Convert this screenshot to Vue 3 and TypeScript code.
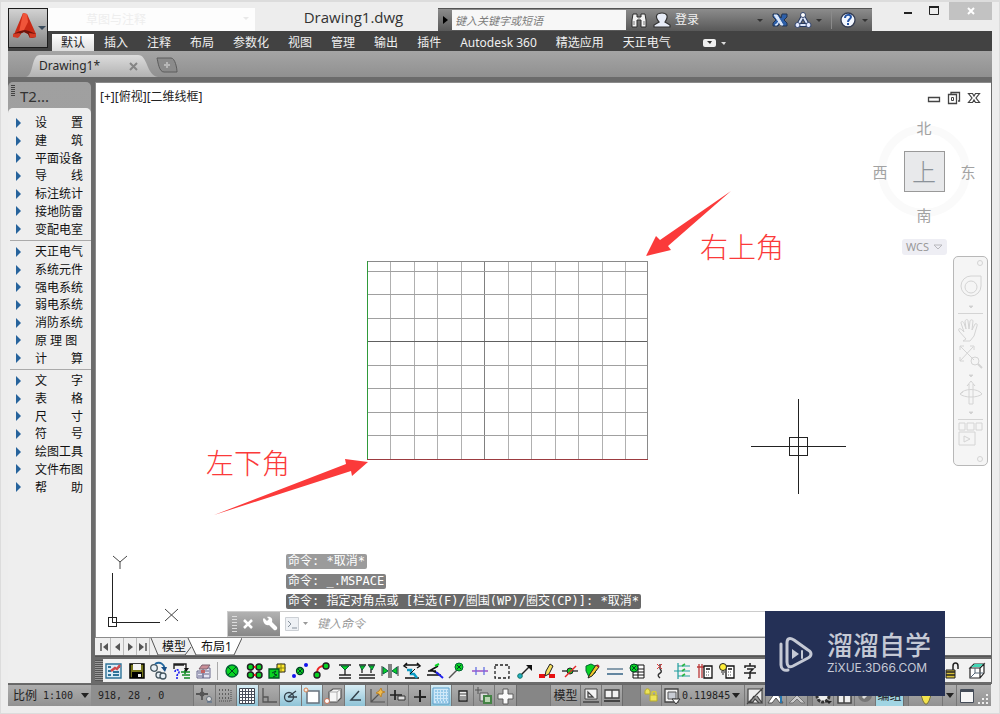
<script setup lang="ts">
import { ref } from 'vue'

interface Cell { name: string; icon: string; on?: boolean }

const ribbonTabs = ['默认', '插入', '注释', '布局', '参数化', '视图', '管理', '输出', '插件', 'Autodesk 360', '精选应用', '天正电气']
const activeTab = ref('默认')
const query = ref('')
const command = ref('')

const menuGroups: string[][] = [
  ['设 置', '建 筑', '平面设备', '导 线', '标注统计', '接地防雷', '变配电室'],
  ['天正电气', '系统元件', '强电系统', '弱电系统', '消防系统', '原 理 图', '计 算'],
  ['文 字', '表 格', '尺 寸', '符 号', '绘图工具', '文件布图', '帮 助'],
]

const history = [
  { text: '命令: *取消*', shade: 'pale' },
  { text: '命令: _.MSPACE', shade: 'mid' },
  { text: '命令: 指定对角点或 [栏选(F)/圈围(WP)/圈交(CP)]: *取消*', shade: 'deep' },
]

const gridX = [390, 414, 437, 461, 484, 508, 531, 555, 578, 602, 625]
const gridY = [271, 294, 318, 341, 365, 388, 412, 435]
const majorLines = [484, 341]

const fileTools: Cell[] = [
  { name: '图纸', icon: '<path d="M2 3h15v14H2z" fill="#d9ecf8" stroke="#2f7398" stroke-width="1.4"/><path d="M4 6h3M4 10h3M4 14h3M9 14h6M9 11h6M15 6h1" stroke="#2f7398" stroke-width="2"/><path d="M7 10l4-3 2 1 3-4" stroke="#d0494b" stroke-width="2.4" fill="none"/>' },
  { name: '保存', icon: '<path d="M3 3h14v14H3z" fill="#77771c" stroke="#000" stroke-width="1.5"/><path d="M6 3h8v6H6z" fill="#f4f4f4"/><path d="M5 11h10v6H5z" fill="#000"/><path d="M11 13h3v3h-3z" fill="#eee"/>' },
  { name: '替换', icon: '<circle cx="5" cy="7" r="3.3" fill="#e9f1f7" stroke="#45565f" stroke-width="1.3"/><circle cx="10" cy="14" r="3" fill="#e9f1f7" stroke="#45565f" stroke-width="1.3"/><circle cx="14" cy="15" r="3" fill="#e9f1f7" stroke="#45565f" stroke-width="1.3"/><path d="M6 3c5-3 9 0 10 5" fill="none" stroke="#24689f" stroke-width="2"/><path d="M12 6h6l-2 5z" fill="#184f87"/>' },
  { name: '查询', icon: '<path d="M2 8V3h12v5M2 4h10" stroke="#222" fill="none" stroke-width="1.4"/><path d="M3 11c0-3 4-3 4 0 0 2-2 2-2 4m0 1v2" stroke="#1414f0" fill="none" stroke-width="1.5" stroke-dasharray="2 1"/><path d="M9 11h9M10 14h8M12 17h6M13 9v4" stroke="#118c22" stroke-width="1.6"/><path d="M12 7h5l-3 4z" fill="#111"/>' },
  { name: '楼层', icon: '<path d="M3 10h6v7H3zM9 7h7v10H9z" fill="#e4e4f2" stroke="#66668a"/><path d="M4 12h4M4 15h4M10 10h5M10 13h5" stroke="#66668a"/><path d="M5 8l3-4h8l-3 4z" fill="#ca8f98" stroke="#7d6270"/><path d="M7 9h4v3H7z" fill="#c36363"/>' },
]

const g = '#08d423'
const drawTools: Cell[] = [
  { name: '灯具', icon: `<circle cx="10" cy="10" r="6" fill="${g}" stroke="#063" stroke-width="1.4"/><path d="M6 6l8 8M14 6l-8 8" stroke="#042"/>` },
  { name: '阵列灯具', icon: `<path d="M6 6h8v8H6z" fill="none" stroke="#555"/><circle cx="5.500" cy="6" r="3" fill="${g}" stroke="#222" stroke-width="1.5"/><circle cx="14" cy="6" r="3" fill="${g}" stroke="#222" stroke-width="1.5"/><circle cx="5.500" cy="14" r="3" fill="${g}" stroke="#222" stroke-width="1.5"/><circle cx="14" cy="14" r="3" fill="${g}" stroke="#222" stroke-width="1.5"/><path d="M9 6h2M9 14h2" stroke="#e22" stroke-width="2"/>` },
  { name: '插座', icon: `<path d="M10 3h8v8h-8z" fill="#ffe92e" stroke="#222"/><path d="M14 2v10M9 7h10" stroke="#8b8312"/><path d="M2 8h10v9H2z" fill="${g}" stroke="#052" stroke-width="1.3"/><path d="M5 12l4-2-2 3 3 1-4 2" fill="none" stroke="#042"/>` },
  { name: '插灯', icon: `<circle cx="10" cy="10" r="3.500" fill="${g}" stroke="#042" stroke-width="1.3"/><circle cx="4" cy="15" r="2" fill="#1212ed"/><circle cx="16" cy="4" r="2" fill="#1212ed"/><path d="M8 8l4 4M12 8l-4 4" stroke="#042"/>` },
  { name: '弧线布置', icon: `<path d="M5 12C5 6 9 5 13 5" fill="none" stroke="#e22" stroke-width="1.8"/><circle cx="5" cy="14" r="3" fill="${g}" stroke="#222" stroke-width="1.4"/><circle cx="14" cy="5" r="3" fill="${g}" stroke="#222" stroke-width="1.4"/>` },
  { name: '插接', icon: `<path d="M4 4h12M4 14h12M4 17h12M10 8v6" stroke="#222" stroke-width="1.3"/><path d="M6 5h8l-4 4z" fill="${g}" stroke="#063"/>` },
  { name: '双插接', icon: `<path d="M2 4h7M11 4h7M2 14h16M2 17h16M5 8v4M14 8v4" stroke="#222" stroke-width="1.3"/><path d="M3 5h5l-3 4zM12 5h5l-2 4z" fill="${g}" stroke="#063"/>` },
  { name: '镜像', icon: `<path d="M9 3v14M11 3v14" stroke="#111"/><path d="M3 6v7l5-3zM17 6v7l-5-3z" fill="${g}" stroke="#064"/><path d="M2 5v10M18 5v10" stroke="#333"/>` },
  { name: '移动', icon: '<path d="M3 4h14M5 2L2 5l3 2M15 2l3 3-3 2M3 17h14" stroke="#111" fill="none" stroke-width="1.5"/><path d="M5 9h4v4h3l3 4" stroke="#0a9bc5" stroke-width="2.500" fill="none"/><path d="M8 13l5-5" stroke="#111"/>' },
  { name: '编辑', icon: `<path d="M2 14h14M3 10h8M13 5L6 9l8 4" stroke="#111" stroke-width="1.6" fill="none"/><path d="M10 5l4-2" stroke="${g}" stroke-width="2"/><path d="M11 11l7 6" stroke="#2020f0" stroke-width="2"/>` },
  { name: '探测器', icon: `<path d="M2 17l8-8" stroke="#555" stroke-width="1.4"/><circle cx="12" cy="6" r="4" fill="${g}" stroke="#063"/><path d="M10 4l4 4M14 4l-4 4" stroke="#042"/>` },
  { name: '布线', icon: '<path d="M2 10h16" stroke="#8e39c0" stroke-width="1.3"/><path d="M6 6v8M14 6v8" stroke="#6570e2" stroke-width="1.3"/>' },
  { name: '框选', icon: '<path d="M3 4h14v13H3z" fill="none" stroke="#222" stroke-width="1.3" stroke-dasharray="3 2"/>' },
  { name: '引线', icon: '<path d="M6 14L15 5" stroke="#222" stroke-width="1.5"/><path d="M11 4h6v6z" fill="#111"/><circle cx="5" cy="15" r="2.300" fill="#20afc7" stroke="#176"/>' },
  { name: '标记', icon: '<path d="M2 15h6M12 15h6" stroke="#e71111" stroke-width="4"/><path d="M9 10l4-7 3 2-4 8-4 2z" fill="#f5df5e" stroke="#222"/>' },
  { name: '断线', icon: `<path d="M2 10h16" stroke="#333" stroke-width="1.4"/><circle cx="10" cy="10" r="3" fill="${g}" stroke="#222"/><path d="M5 16L16 5" stroke="#e52727" stroke-width="1.5"/>` },
  { name: '画笔', icon: `<path d="M4 5l5-2 6 3-2 6-6 4-3-6z" fill="${g}" stroke="#063"/><path d="M8 13l6-9 3 2-7 9-4 2z" fill="#f3c72c" stroke="#222"/><path d="M15 4l2 2" stroke="#a23" stroke-width="2"/>` },
  { name: '平行线', icon: '<path d="M2 8h16" stroke="#1d4868"/><path d="M2 13h16" stroke="#6386a0" stroke-width="2"/>' },
  { name: '统计表', icon: `<path d="M6 4h11v13H6zM6 8h11M6 11h11M6 14h11M11 4v13" fill="#fff" stroke="#111"/><circle cx="7" cy="7" r="4" fill="${g}" stroke="#042"/><path d="M5 5l4 4M9 5l-4 4" stroke="#042"/>` },
  { name: '回路', icon: '<path d="M10 17c-6-5 5-4 0-9M10 8V3" fill="none" stroke="#333" stroke-width="1.4"/><path d="M7 3l5 5M12 3L7 8" stroke="#e13838"/>' },
  { name: '系统图', icon: '<path d="M6 2v16M6 5h12M2 10h16M6 15h12" stroke="#1e9d9d" stroke-width="1.2"/><path d="M10 5l3-2M10 10l3-2M10 15l3-2" stroke="#2ab543" stroke-width="1.6"/>' },
  { name: '配电箱', icon: '<path d="M2 6h8M4 3v14M7 3v14" stroke="#ba3838" stroke-width="1.3"/><path d="M9 5h8v12H9z" fill="#fff" stroke="#111" stroke-width="1.300"/><path d="M11 8h4" stroke="#111" stroke-width="1.500"/><path d="M11 11h1m1 0h1M11 14h1m1 0h1" stroke="#555"/>' },
  { name: '照度计算', icon: '<path d="M9 5h8v12H9z" fill="#fff" stroke="#111" stroke-width="1.300"/><path d="M11 8h4" stroke="#111" stroke-width="1.500"/><path d="M11 11h1m1 0h1M11 14h1m1 0h1" stroke="#555"/><circle cx="6" cy="6" r="3.500" fill="#ffef38" stroke="#222"/><path d="M4 11h4M5 13h2" stroke="#222"/>' },
  { name: '文字', icon: '<path d="M10 2v3M5 7V5h10v2M7 8h6l-3 3v6H8M4 12h12" fill="none" stroke="#222" stroke-width="1.500"/>' },
]
const endTools: Cell[] = [
  { name: '解锁', icon: '<path d="M3 9h9v8H3z" fill="#d8c13a" stroke="#222"/><path d="M3 11h9M3 14h9" stroke="#222" stroke-width="1.5"/><path d="M10 9V5c0-4 5-4 5 0v3" fill="none" stroke="#222" stroke-width="1.500"/>' },
  { name: '三维视图', icon: '<path d="M4 7l4-4h10l-4 4zM4 7h10v10H4zM14 7l4-4v9l-4 5" fill="#fff" stroke="#222" stroke-width="1.2"/><path d="M5 6l4-3h8l-3 3z" fill="#40d6b5"/><path d="M4 17l5-5V7M9 12h8" fill="none" stroke="#567"/>' },
]

const modeCells: Cell[] = [
  { name: '推断约束', icon: '<path d="M8 2v12M2 8h12" stroke="#3c3c3c" stroke-width="1.3"/><circle cx="8" cy="8" r="2.500" fill="#555"/><circle cx="15" cy="13" r="2.500" fill="#ddd" stroke="#68717c"/><path d="M13 16h5" stroke="#516b88"/>' },
  { name: '捕捉', icon: '<path d="M3 4h11M3 8h11M3 12h11" stroke="#4a4a4a" stroke-width="1.3" stroke-dasharray="1 2"/><path d="M15 4v12M3 15h12" stroke="#4a4a4a" stroke-dasharray="1 1"/>' },
  { name: '栅格', on: true, icon: '<path d="M2.500 2.500h15v15h-15z" fill="#fff" stroke="#3e4550"/><path d="M5.500 2v15M8.500 2v15M11.500 2v15M14.500 2v15M2 5.500h15M2 8.500h15M2 11.500h15M2 14.500h15" stroke="#4b505d"/>' },
  { name: '正交', icon: '<path d="M4 2v14h14M4 11h5v5" fill="none" stroke="#555" stroke-width="1.300"/>' },
  { name: '极轴', on: true, icon: '<circle cx="9" cy="11" r="4.500" fill="none" stroke="#34424c" stroke-width="1.3"/><path d="M8 11L16 5M8 11h9" stroke="#34424c" stroke-width="1.3"/>' },
  { name: '对象捕捉', on: true, icon: '<path d="M5 5h12v12H5z" fill="#fff" stroke="#68727c" stroke-width="1.500"/><circle cx="4" cy="4" r="2" fill="#f5ece3" stroke="#d88353"/>' },
  { name: '三维捕捉', icon: '<path d="M6 6l4-3h8v9l-4 4H6z" fill="#f6f6f6" stroke="#555" stroke-width="1.2"/><path d="M6 6h8v10M14 6l4-3" fill="none" stroke="#aaa"/><circle cx="4" cy="15" r="2.500" fill="#fff" stroke="#cb7355"/>' },
  { name: '对象追踪', on: true, icon: '<path d="M14 5L6 14h10" fill="none" stroke="#34424c" stroke-width="1.5"/>' },
  { name: '动态坐标', icon: '<path d="M4 3v13h14M4 16L13 7" fill="none" stroke="#555" stroke-width="1.200"/><path d="M14 2l1 3 3 1-3 1-1 4-2-3-3-1 3-2z" fill="#efbb4b" stroke="#bd852c"/>' },
  { name: '动态输入', icon: '<path d="M7 4v10M2 9h12" stroke="#222" stroke-width="1.700"/><path d="M10 10h7v4h-7z" fill="#ddd" stroke="#333"/>' },
  { name: '线宽', icon: '<path d="M10 4v7M4 11h6" stroke="#222" stroke-width="1.500"/><path d="M10 4v12M10 11h6" stroke="#222" stroke-width="2"/>' },
  { name: '透明度', on: true, icon: '<path d="M2 2h16v16H2z" fill="#cfe8f8" stroke="#5ba0cc"/><path d="M4 5h13M4 8h13M4 11h13M4 14h13M5 16h12" stroke="#5fa9d8" stroke-width="1.200" stroke-dasharray="2 1"/>' },
  { name: '快捷特性', icon: '<path d="M6 5h8v10H6z" fill="#eee" stroke="#222" stroke-width="1.3"/><path d="M6 8h8M8 10v4M10 10v4M12 10v4" stroke="#444"/>' },
  { name: '选择循环', icon: '<path d="M4 1v7M1 4h7" stroke="#555"/><path d="M6 7h8v8H6z" fill="#ddd" stroke="#555"/><path d="M10 10h7v7h-7z" fill="#b9d6b2" stroke="#438344" stroke-width="2"/>' },
  { name: '注释监视器', icon: '<path d="M7 3h5v5h5v5h-5v5H7v-5H2V8h5z" fill="#fafafa" stroke="#5c5c5c"/>' },
]

const viewTools: Cell[] = [
  { name: '模型视图', icon: '<path d="M4 3h12v10H4z" fill="#f2f2f2" stroke="#444"/><path d="M7 6v5h5zM2 16h16" fill="none" stroke="#444" stroke-width="1.300"/>' },
  { name: '图纸视图', icon: '<path d="M3 4h7v8H3zM10 4h7v8h-7z" fill="#f2f2f2" stroke="#444" stroke-width="1.300"/><path d="M2 15h16" stroke="#444" stroke-width="2"/>' },
]
</script>

<template>
  <div class="frame">
    <header class="titlebar">
      <button class="app-button" aria-label="应用程序菜单">
        <svg width="38" height="38" viewBox="0 0 38 38">
          <path d="M14 4l4 1 9 20v3l-6 1-2-4-4-2-3 1-2 4-5-1 1-4z" fill="#c92a16" />
          <path d="M14 4l4 1 1 8-4 8-5 2z" fill="#f0553a" />
          <path d="M4 25l7-3 5-1 4 1 7 3v3l-6 1-2-4-4-2-4 2-2 3-5-1z" fill="#6f130b" />
          <path d="M4 25l6-1 2 1-3 4-5-1zM20 24l7 1v3l-6 1z" fill="#d23a24" />
          <path d="M29 17h8l-4 4z" fill="#3a4b5c" />
        </svg>
      </button>
      <div class="quick"><span>草图与注释</span><i></i></div>
      <h1>Drawing1.dwg</h1>
      <div class="info">
        <button class="expand" aria-label="展开"><svg width="12" height="20" viewBox="0 0 12 20"><path d="M4 6l5 4-5 4z" fill="#000" /></svg></button>
        <input v-model="query" type="text" placeholder="键入关键字或短语" aria-label="搜索" />
        <button aria-label="搜索帮助">
          <svg width="18" height="18" viewBox="0 0 18 18"><path d="M3 3h4v3h4V3h4l1 6v7h-5V9H7v7H2V9z" fill="#f2f2f2" stroke="#2d2d2d" /><path d="M4 10v4M14 10v4M9 6v3" stroke="#777" /></svg>
        </button>
        <button class="sign">
          <svg width="18" height="18" viewBox="0 0 18 18"><path d="M6 11c-5-6-2-9 3-9s7 3 3 9l5 3v2H1v-2z" fill="#e8edf8" stroke="#333" stroke-width="1.200" /></svg>
          <span>登录</span>
        </button>
        <button class="sign-more" aria-label="登录选项"><i class="tri"></i></button>
        <button aria-label="Exchange">
          <svg width="18" height="18" viewBox="0 0 18 18"><path d="M2 3h5l3 4 1-4h5v3l-3 3 3 3v3h-5l-2-3-2 3H2v-3l3-3-3-3z" fill="#2d5fa8" stroke="#233450" /><path d="M3 4h3l6 10h-2zM4 14h2l2-4" fill="#dce8fa" stroke="#dce8fa" /></svg>
        </button>
        <button class="a360" aria-label="Autodesk 360 服务">
          <svg width="18" height="18" viewBox="0 0 18 18"><path d="M9 5L4 14h10z" fill="none" stroke="#26385f" stroke-width="4" /><path d="M9 5L4 14h10z" fill="none" stroke="#dce6fa" stroke-width="2" /><circle cx="9" cy="4" r="2.500" fill="#fff" stroke="#33466f" /><circle cx="3.500" cy="14" r="2.500" fill="#e4eaff" stroke="#33466f" /><circle cx="14.500" cy="14" r="2.500" fill="#e4eaff" stroke="#33466f" /></svg>
          <i class="tri"></i>
        </button>
        <button class="help" aria-label="帮助">
          <svg width="18" height="18" viewBox="0 0 18 18"><circle cx="9" cy="9" r="7" fill="#f3f7ff" stroke="#333b50" stroke-width="1.300" /><path d="M6 7c0-4 6-4 6-1 0 2-3 2-3 5m0 1v2" fill="none" stroke="#2454a4" stroke-width="2" /></svg>
          <i class="tri"></i>
        </button>
      </div>
      <div class="window-buttons">
        <button aria-label="最小化"><svg width="12" height="12" viewBox="0 0 12 12"><path d="M2 8h8" stroke="#222" stroke-width="2" /></svg></button>
        <button aria-label="最大化"><svg width="12" height="12" viewBox="0 0 12 12"><path d="M1.500 2.500h9v7h-9z" fill="none" stroke="#222" /><path d="M1 2h10" stroke="#222" stroke-width="2" /></svg></button>
        <button class="close" aria-label="关闭"><svg width="12" height="12" viewBox="0 0 12 12"><path d="M3 3l6 6M9 3l-6 6" stroke="#fff" stroke-width="2" /></svg></button>
      </div>
    </header>

    <nav class="ribbon">
      <button v-for="tab in ribbonTabs" :key="tab" :class="{ active: tab === activeTab }" @click="activeTab = tab">{{ tab }}</button>
      <button class="ribbon-toggle" aria-label="最小化功能区">
        <svg width="24" height="10" viewBox="0 0 24 10"><rect x="0" y="1" width="13" height="8" rx="2" fill="#eee" /><path d="M4 3h5l-2 3z" fill="#333" /><path d="M18 4h5l-2 3z" fill="#ddd" /></svg>
      </button>
    </nav>

    <div class="documents">
      <button class="doc">
        <svg class="doc-shape" width="136" height="22" viewBox="0 0 136 22">
          <defs><linearGradient id="tabFill" x1="0" y1="0" x2="0" y2="1"><stop offset="0" stop-color="#dcdcdc" /><stop offset="1" stop-color="#b2b2b2" /></linearGradient></defs>
          <path d="M0 22c8-2 5-22 14-22h98c10 0 8 20 20 22z" fill="url(#tabFill)" />
        </svg>
        <span>Drawing1*</span>
        <svg width="9" height="9" viewBox="0 0 9 9"><path d="M1 1l7 7M8 1L1 8" stroke="#858585" stroke-width="2" /></svg>
      </button>
      <button class="new-doc" aria-label="新图形">
        <svg width="24" height="18" viewBox="0 0 24 18"><path d="M2 2h14c4 0 6 10 6 14H9C4 16 3 6 2 2z" fill="#8b8b8b" stroke="#5c5c5c" /><path d="M12 6v6M9 9h6" stroke="#b7b7b7" stroke-width="2" /></svg>
      </button>
    </div>

    <div class="body">
      <aside class="palette">
        <div class="palette-head"><i></i><span>T2...</span></div>
        <div class="menu">
          <ul v-for="(group, i) in menuGroups" :key="i">
            <li v-for="item in group" :key="item"><button><i></i><span :class="{ spread: item.length === 3 }">{{ item }}</span></button></li>
          </ul>
        </div>
      </aside>

      <main class="work">
        <section class="canvas">
          <svg class="drawing" width="896" height="554" viewBox="96 83 896 554">
            <g fill="none" stroke="#b4b4b4" stroke-width="1">
              <path v-for="x in gridX" :key="`x${x}`" :d="`M${x}.5 261V459`" :stroke="majorLines.includes(x) ? '#808080' : '#b0b0b0'" />
              <path v-for="y in gridY" :key="`y${y}`" :d="`M367 ${y}.5H648`" :stroke="majorLines.includes(y) ? '#606060' : '#a0a0a0'" />
              <path d="M367 261.500H648M647.500 261V459" stroke="#8a8a8a" />
              <path d="M367.500 261V459" stroke="#2f9a3a" />
              <path d="M367 459.500H648" stroke="#9c3b40" />
            </g>
            <g fill="#fb3a3a">
              <path d="M731 191L668 246l3 4-25 6 10-20 4 4z" />
              <path d="M214 515l132-51-1-5 23 3-16 14-1-5z" />
            </g>
            <g fill="none" stroke="#222" shape-rendering="crispEdges">
              <path d="M751 446.500H846M798.500 399V494M789.500 437.500h18v18h-18z" />
              <path d="M112.500 573V622H160M108.500 617.500h8v9h-8z" />
            </g>
            <g fill="none" stroke="#444"><path d="M113 556l7 6 7-6M120 562v7M165 609l13 12M178 609l-13 12" /></g>
          </svg>
          <span class="view-label">[+][俯视][二维线框]</span>
          <span class="note upper">右上角</span>
          <span class="note lower">左下角</span>

          <div class="view-buttons">
            <button aria-label="最小化视图"><svg width="14" height="14" viewBox="0 0 14 14"><path d="M1.500 6.500h11v4h-11z" fill="#fff" stroke="#444" stroke-width="1.300" /></svg></button>
            <button aria-label="还原视图"><svg width="14" height="14" viewBox="0 0 14 14"><path d="M4 3V1.500h8.500V10H11M1.500 3.500h8v9h-8z" fill="none" stroke="#444" stroke-width="1.300" /><path d="M4.500 6.500h2v3h-2z" fill="none" stroke="#444" /></svg></button>
            <button aria-label="关闭视图"><svg width="14" height="14" viewBox="0 0 14 14"><path d="M1.500 2.500h4L7 5l1.500-2.500h4L9 7l3.500 4.500h-4L7 9l-1.500 2.500h-4L5 7z" fill="#fff" stroke="#444" stroke-width="1.200" /></svg></button>
          </div>

          <div class="cube">
            <span>北</span>
            <div class="cube-row"><span>西</span><button>上</button><span>东</span></div>
            <span>南</span>
          </div>
          <button class="wcs">WCS <svg width="10" height="7" viewBox="0 0 10 7"><path d="M1 1h8L5 5z" fill="none" stroke="#b8b8bd" /></svg></button>

          <div class="nav-bar">
            <svg width="33" height="208" viewBox="0 0 33 208" fill="none" stroke="#d4d4d4">
              <circle cx="26" cy="6" r="2.500" /><circle cx="26" cy="202" r="2.500" />
              <path d="M17 19h10v10a10 10 0 1 1-10-10z" /><circle cx="17" cy="30" r="6" />
              <path d="M15 49h4l-2 2zM15 118h4l-2 2zM15 155h4l-2 2z" fill="#ccc" />
              <path d="M4 56.500h25M4 162.500h25" />
              <path d="M12 82l-7-8c-1-3 1-3 3-1l2 2-3-9c0-2 2-2 3 0l2 6-1-8c1-2 3-2 3 0l1 8 1-8c1-2 3-1 3 0l-1 9 3-6c1-1 3 0 2 2l-3 10-4 5h-7z" />
              <path d="M6 89l14 14M6 104l13-14M6 93v-4h4M16 89h4v4M6 100v4h4" /><circle cx="21" cy="104" r="4" /><path d="M24 107l4 4" stroke-width="2" />
              <path d="M15 127v20h4v-20l2 2-4-5-4 5zM6 137c4-6 18-6 22 0-4 4-18 4-22 0l3-2" />
              <path d="M5 166h6v7H5zM13 166h7v7h-7zM22 166h6v7h-6zM5 175h16v13H5zM10 179l6 3-6 3z" />
            </svg>
          </div>

          <div class="history">
            <span v-for="line in history" :key="line.text" :class="line.shade">{{ line.text }}</span>
          </div>
          <div class="command">
            <div class="command-tools">
              <i></i>
              <button aria-label="关闭命令行"><svg width="12" height="12" viewBox="0 0 12 12"><path d="M2 2l8 8M10 2l-8 8" stroke="#fff" stroke-width="2.500" /></svg></button>
              <button aria-label="自定义"><svg width="16" height="16" viewBox="0 0 16 16"><path d="M2 2l3 3 2-2-2-2c4-1 6 2 5 5l5 5c1 2-1 4-3 3L7 9C4 10 1 7 1 3z" fill="#fff" /></svg></button>
            </div>
            <button class="prompt" aria-label="最近使用的命令"><svg width="26" height="16" viewBox="0 0 26 16"><path d="M1.500 1.500h13v13h-13z" fill="#eef1f5" stroke="#ccd0d5" /><path d="M4 5l3 3-3 3M8 12h5" fill="none" stroke="#87919c" /><path d="M19 6h5l-2.500 3z" fill="#999" /></svg></button>
            <input v-model="command" type="text" placeholder="键入命令" aria-label="命令" />
          </div>
        </section>

        <div class="sheets">
          <div class="sheet-nav">
            <button aria-label="首页"><svg width="12" height="12" viewBox="0 0 12 12"><path d="M3 2v8" stroke="#555" stroke-width="1.500" /><path d="M10 2v8L5 6z" fill="#555" /></svg></button>
            <button aria-label="上一页"><svg width="12" height="12" viewBox="0 0 12 12"><path d="M9 2v8L4 6z" fill="#555" /></svg></button>
            <button aria-label="下一页"><svg width="12" height="12" viewBox="0 0 12 12"><path d="M4 2v8l5-4z" fill="#555" /></svg></button>
            <button aria-label="末页"><svg width="12" height="12" viewBox="0 0 12 12"><path d="M9 2v8" stroke="#555" stroke-width="1.500" /><path d="M2 2v8l5-4z" fill="#555" /></svg></button>
          </div>
          <div class="sheet-tabs">
            <svg width="92" height="17" viewBox="0 0 92 17"><path d="M38 0h54l-8 17H46z" fill="#fff" /><path d="M1 0l7 17h27l6-8M38 0l8 17h38l8-17" fill="none" stroke="#555" /></svg>
            <button>模型</button><button>布局1</button>
          </div>
        </div>

        <div class="tools">
          <i class="grip"></i>
          <div class="tool-strip">
            <div class="file-tools"><button v-for="t in fileTools" :key="t.name" :aria-label="t.name"><svg width="20" height="20" viewBox="0 0 20 20" v-html="t.icon" /></button></div>
            <i class="tool-rule"></i>
            <div class="draw-tools"><button v-for="t in drawTools" :key="t.name" :aria-label="t.name"><svg width="20" height="20" viewBox="0 0 20 20" v-html="t.icon" /></button></div>
            <div class="end-tools"><button v-for="t in endTools" :key="t.name" :aria-label="t.name"><svg width="20" height="20" viewBox="0 0 20 20" v-html="t.icon" /></button></div>
          </div>
        </div>
      </main>
    </div>

    <footer class="status">
      <label class="ratio"><span>比例</span><select aria-label="比例"><option>1:100</option></select><i class="arrow"></i></label>
      <output class="coords">918, 28 , 0</output>
      <div class="modes"><button v-for="c in modeCells" :key="c.name" :class="{ on: c.on }" :aria-label="c.name"><svg width="20" height="20" viewBox="0 0 20 20" v-html="c.icon" /></button></div>
      <span class="well wide"></span>
      <button class="space">模型</button>
      <button v-for="c in viewTools" :key="c.name" class="cell" :aria-label="c.name"><svg width="20" height="20" viewBox="0 0 20 20" v-html="c.icon" /></button>
      <span class="well"></span>
      <button class="cell" aria-label="锁定比例"><svg width="20" height="20" viewBox="0 0 20 20"><path d="M4 5c1-3 4-3 5 0v3H4zM9 9h7v6H9z" fill="#ede45a" stroke="#b8ad2a" /><path d="M11 9V7c0-2 4-2 4 0v2" fill="none" stroke="#d8ce37" stroke-width="1.500" /></svg></button>
      <label class="scale">
        <svg width="20" height="20" viewBox="0 0 20 20"><path d="M3 3h13v13H3z" fill="#f3f3f3" stroke="#444" stroke-width="1.300" /><path d="M6 6h8v7H6z" fill="#c8ccd4" stroke="#555" /><path d="M10 13h8l-4 5z" fill="#fff" stroke="#333" /></svg>
        <select aria-label="视口比例"><option>0.119845</option></select><i class="arrow"></i>
      </label>
      <button class="cell" aria-label="注释比例"><svg width="20" height="20" viewBox="0 0 20 20"><path d="M3 3h14v14H3zM2 18L18 2M9 10l-4 6h3l2-3 4 4h3l-5-7" fill="#eee" stroke="#444" stroke-width="1.200" /></svg></button>
      <button class="cell" aria-label="注释可见性"><svg width="20" height="20" viewBox="0 0 20 20"><path d="M10 5L2 17h4l4-5 4 5h3z" fill="#fff" stroke="#555" /><path d="M15 9v8" stroke="#2676b0" stroke-width="2" /></svg></button>
      <button class="cell" aria-label="自动缩放"><svg width="20" height="20" viewBox="0 0 20 20"><path d="M10 9l-8 8h4l4-4 4 4h4z" fill="#ccc" stroke="#777" /></svg></button>
      <span class="well slim"></span>
      <button class="cell" aria-label="切换工作空间"><svg width="20" height="20" viewBox="0 0 20 20"><circle cx="10" cy="10" r="6" fill="#eee" stroke="#333" stroke-width="3" stroke-dasharray="3 1" /><path d="M13 15h6l-3 3z" fill="#222" /></svg></button>
      <button class="cell" aria-label="锁定界面"><svg width="20" height="20" viewBox="0 0 20 20"><path d="M4 6h13v11H4zM10 5v12" fill="#eee" stroke="#444" stroke-width="1.500" /></svg></button>
      <button class="cell" aria-label="硬件加速"><svg width="20" height="20" viewBox="0 0 20 20"><circle cx="10" cy="9" r="7" fill="#777" /><path d="M8 12l8-8" stroke="#ddd" stroke-width="3" /></svg></button>
      <button class="group-name">编组</button>
      <span class="well slim"></span>
      <button class="isolate" aria-label="隔离对象"><svg width="20" height="20" viewBox="0 0 20 20"><path d="M5 9h10l-2 6-2 3H9l-2-3z" fill="#f3e34d" stroke="#7c7639" /></svg></button>
      <button class="menu-arrow" aria-label="状态栏菜单"><i class="arrow"></i></button>
      <button class="cell" aria-label="全屏显示"><svg width="20" height="20" viewBox="0 0 20 20"><path d="M3.500 3.500h13v13h-13z" fill="#f6f6f6" stroke="#444c58" /><path d="M4 5h12" stroke="#444c58" stroke-width="2" /></svg></button>
      <svg class="resize" width="14" height="14" viewBox="0 0 14 14"><path d="M9 2h2v2H9zM5 6h2v2H5zM9 6h2v2H9zM1 10h2v2H1zM5 10h2v2H5zM9 10h2v2H9z" fill="#eee" /></svg>
    </footer>

    <div class="brand">
      <svg width="36" height="38" viewBox="0 0 36 38" fill="none" stroke="#c5c9d5" stroke-width="3" stroke-linejoin="round" stroke-linecap="round">
        <path d="M9 8v19c0 4 2 6 6 4l15-8c4-2 4-6 0-8L16 5C11 2 9 4 9 8z" /><path d="M3 9v21c0 4 3 6 7 5" />
        <path d="M14 14v10l7-5z" fill="#c5c9d5" stroke="none" /><path d="M24 16v7" stroke-width="2" />
      </svg>
      <div><strong>溜溜自学</strong><span>ZiXUE.3D66.COM</span></div>
    </div>
  </div>
</template>

<style>
body { margin: 0; background: #eeeeee; }
</style>

<style scoped>
* { box-sizing: border-box; }
button, input, select { font: inherit; color: inherit; border: 0; padding: 0; margin: 0; background: none; }
button { display: flex; align-items: center; justify-content: center; white-space: nowrap; }
select { appearance: none; }
svg { display: block; flex: none; }
.frame {
  position: relative; display: flex; flex-direction: column; min-height: 100vh;
  padding: 6px 7px 7px; border: 1px solid #dcdcdc; border-top-width: 2px; background: #ededed;
  font: 12px/16px "Noto Sans", "Noto Sans CJK SC", sans-serif; color: #222;
}
.titlebar { display: flex; height: 23px; }
.app-button {
  position: absolute; left: 7px; top: 6px; z-index: 2; width: 40px; height: 40px;
  border: 1px solid #1c1c1c; background: linear-gradient(#d2d2d2, #858585);
}
.quick { display: flex; align-items: center; justify-content: space-between; width: 247px; padding: 0 6px 0 78px; background: #fdfdfd; color: #eeeeee; }
.quick i { border: 3px solid transparent; border-top-color: #e8e8e8; }
h1 { flex: 1 1 183px; margin: 0; padding-left: 14px; text-align: center; font: 15px/18px "Open Sans", sans-serif; color: #333; }
.info { display: flex; align-items: center; flex: 0 0 434px; border-top: 1px solid #555; background: linear-gradient(#8c8c8c, #585858); color: #f0f0f0; }
.expand { width: 14px; }
.info input { width: 174px; height: 20px; margin-right: 4px; padding: 0 3px; background: #f7f7f7; color: #333; font-size: 11px; }
.info input::placeholder { color: #7c7c7c; opacity: 1; font-style: italic; }
.command input::placeholder { color: #999; opacity: 1; font-style: italic; }
.info > button:nth-of-type(2) { width: 18px; }
.sign { gap: 4px; margin-left: 5px; }
.sign-more { margin-left: auto; }
.tri { border: 3px solid transparent; border-top-color: #333; margin-top: 3px; }
.sign-more + button { margin-left: 8px; }
.a360 { margin-left: 5px; gap: 4px; padding-right: 9px; border-right: 1px solid #8a8a8a; }
.help { margin: 0 4px 0 7px; gap: 5px; }
.window-buttons { display: flex; flex: 1 0 120px; justify-content: flex-end; margin-top: -6px; }
.window-buttons button { width: 26px; height: 18px; }
.window-buttons .close { width: 43px; margin-left: 2px; background: #c2c2c2; }
.ribbon { display: flex; gap: 1px; height: 20px; padding: 3px 0 0 44px; background: #424242; color: #f0f0f0; }
.ribbon button { padding: 0 9px; }
.ribbon .active { background: linear-gradient(#fff, #dedede); color: #222; }
.ribbon .ribbon-toggle { margin-left: 13px; }
.documents { display: flex; align-items: flex-end; height: 26px; padding-left: 18px; background: linear-gradient(#a5a5a5, #909090); }
.doc { position: relative; justify-content: flex-start; width: 134px; height: 22px; gap: 29px; padding-left: 13px; color: #292929; }
.doc > * { position: relative; }
.doc .doc-shape { position: absolute; left: 0; top: 0; }
.new-doc { margin: 0 0 3px -5px; z-index: 1; }
.body { display: flex; flex: 1; padding: 5px 1px 1px 0; background: #6b6b6b; }
.palette { flex: 0 0 83px; display: flex; flex-direction: column; margin-right: 4px; border-radius: 5px 5px 0 0; background: linear-gradient(#a0a0a0, #969696); }
.palette-head { display: flex; height: 26px; font-size: 15px; line-height: 28px; color: #333; }
.palette-head i { width: 4px; height: 12px; margin: 3px 5px 0 3px; background: repeating-linear-gradient(#444 0 1px, transparent 1px 2px); }
.menu { flex: 1; padding-top: 6px; border-radius: 5px 5px 0 0; background: #eeeeee; color: #111; }
ul { display: grid; grid-auto-rows: 1fr; height: 124px; margin: 0 0 5px 2px; padding: 0; list-style: none; position: relative; }
ul + ul::before { content: ""; position: absolute; left: 0; right: 0; top: -3px; border-top: 1px solid #aaa; }
li button { height: 100%; padding-left: 6px; line-height: 17px; }
li i { width: 11px; border: 5px solid transparent; border-left-color: #26639c; margin-right: 8px; }
li span { width: 48px; text-align: left; }
li .spread { text-align-last: justify; }
.work { flex: 1; min-width: 0; display: flex; flex-direction: column; }
.canvas { position: relative; flex: 1 0 540px; overflow: hidden; border: 1px solid #8b8b8b; border-width: 1px 0 1px 1px; background: #fff; }
.drawing { position: absolute; left: 0; top: 0; }
.view-label { position: absolute; left: 4px; top: 6px; color: #222; }
.note { position: absolute; color: #fb3a3a; font: 300 28px/32px "Noto Sans CJK SC", sans-serif; }
.upper { left: 604px; top: 147px; }
.lower { left: 110px; top: 363px; }
.view-buttons { position: absolute; right: 10px; top: 8px; display: flex; gap: 6px; }
.cube { position: absolute; right: 11px; top: 34px; width: 112px; display: flex; flex-direction: column; align-items: center; gap: 12px; color: #a2a2a2; font-size: 15px; line-height: 22px; }
.cube::before { content: ""; position: absolute; left: 10px; top: 8px; width: 76px; height: 76px; border: 8px solid #fafafa; border-radius: 50%; }
.cube > * { position: relative; }
.cube-row { display: flex; align-items: center; justify-content: space-between; width: 103px; }
.cube-row button { width: 41px; height: 41px; border: 1px solid #999; background: #e8e9eb; color: #8b9299; font-size: 24px; font-weight: 300; }
.wcs { position: absolute; right: 44px; top: 156px; gap: 4px; height: 16px; padding: 0 4px; border-radius: 3px; background: #eeeef4; color: #999; font-size: 11px; }
.nav-bar { position: absolute; right: 3px; top: 173px; border: 1px solid #b8b8b8; border-radius: 5px; background: #f5f5f5; }
.history { position: absolute; left: 190px; bottom: 28px; display: flex; flex-direction: column; align-items: flex-start; gap: 5px; color: #fff; font: 12px/15px "DejaVu Sans Mono", "Noto Sans CJK SC", monospace; }
.history span { padding: 0 2px; border-radius: 2px; background: #686868; }
.history .pale { background: #9b9b9b; }
.history .mid { background: #818181; }
.command { position: absolute; left: 131px; bottom: 0; display: flex; align-items: center; width: 650px; height: 26px; border: 1px solid #ccc; background: #fff; }
.command-tools { display: flex; align-items: center; gap: 8px; width: 52px; height: 100%; padding-left: 4px; background: linear-gradient(#b2b2b2, #878787); }
.command-tools i { width: 5px; height: 17px; margin-right: -3px; background: repeating-linear-gradient(#ddd 0 1px, transparent 1px 3px); }
.prompt { margin: 0 7px 0 4px; }
.command input { flex: 1; }
.sheets { display: flex; height: 17px; background: #efefef; color: #111; }
.sheet-nav { display: flex; padding-left: 3px; }
.sheet-nav button { width: 13px; border-right: 1px solid #bbb; }
.sheet-tabs { position: relative; display: flex; gap: 15px; padding-left: 12px; }
.sheet-tabs svg { position: absolute; left: 0; top: 0; }
.sheet-tabs button { position: relative; }
.tools { display: flex; height: 27px; margin-top: 1px; padding: 2px 0 1px; border-top: 1px solid #555; }
.grip { width: 8px; margin: 1px 0; background: repeating-linear-gradient(#555 0 1px, #999 1px 2px); }
.tool-strip { display: flex; flex: 1; align-items: center; padding: 0 5px 0 1px; background: #f2f2f2; }
.file-tools, .draw-tools { display: flex; justify-content: space-between; }
.file-tools { width: 110px; }
.tool-rule { width: 1px; height: 18px; margin: 0 4px 0 3px; background: #aaa; }
.draw-tools { width: 538px; }
.end-tools { display: flex; gap: 3px; margin-left: auto; }
.status { display: flex; height: 22px; margin-right: 1px; border-top: 1px solid #666; background: linear-gradient(#adadad, #929292); color: #222; overflow: hidden; }
.status button { border-left: 1px solid #777; overflow: hidden; }
.ratio { display: flex; align-items: center; flex: 0 0 83px; padding-left: 5px; }
.status select, .coords { font: 10px/20px "DejaVu Sans Mono", monospace; }
.ratio select { width: 38px; margin-left: 6px; }
.arrow { border: 4px solid transparent; border-top: 5px solid #222; border-bottom: 0; }
.coords { flex: 0 0 102px; padding: 1px 0 0 7px; background: #8e8e8e; }
.modes { display: flex; flex: 0 0 323px; }
.modes button { flex: 1; min-width: 0; }
.modes .on { background: linear-gradient(#d8edf5, #8ec3d6); }
.well { flex: 0 0 18px; background: #868686; border-left: 1px solid #6c6c6c; }
.well.wide { flex-basis: 34px; }
.well.slim { flex-basis: 5px; }
.space { flex: 0 0 30px; }
.status .cell { flex: 0 0 21px; }
.scale { display: flex; align-items: center; flex: 0 0 83px; border-left: 1px solid #777; }
.scale select { width: 50px; }
.group-name { flex: 0 0 28px; background: #a1d5e3; }
.isolate { flex: 1 1 30px; }
.menu-arrow { flex: 0 0 14px; }
.resize { align-self: flex-end; }
.brand { position: absolute; right: 54px; bottom: 17px; z-index: 3; display: flex; align-items: center; gap: 13px; width: 180px; height: 85px; padding-left: 13px; background: #243056; color: #c5c9d5; }
.brand div { display: flex; flex-direction: column; }
.brand strong { font: 500 26px/26px "Liberation Sans", "Noto Sans CJK SC", sans-serif; }
.brand span { margin-top: 2px; font: 12px/14px "Inter", sans-serif; }
</style>
